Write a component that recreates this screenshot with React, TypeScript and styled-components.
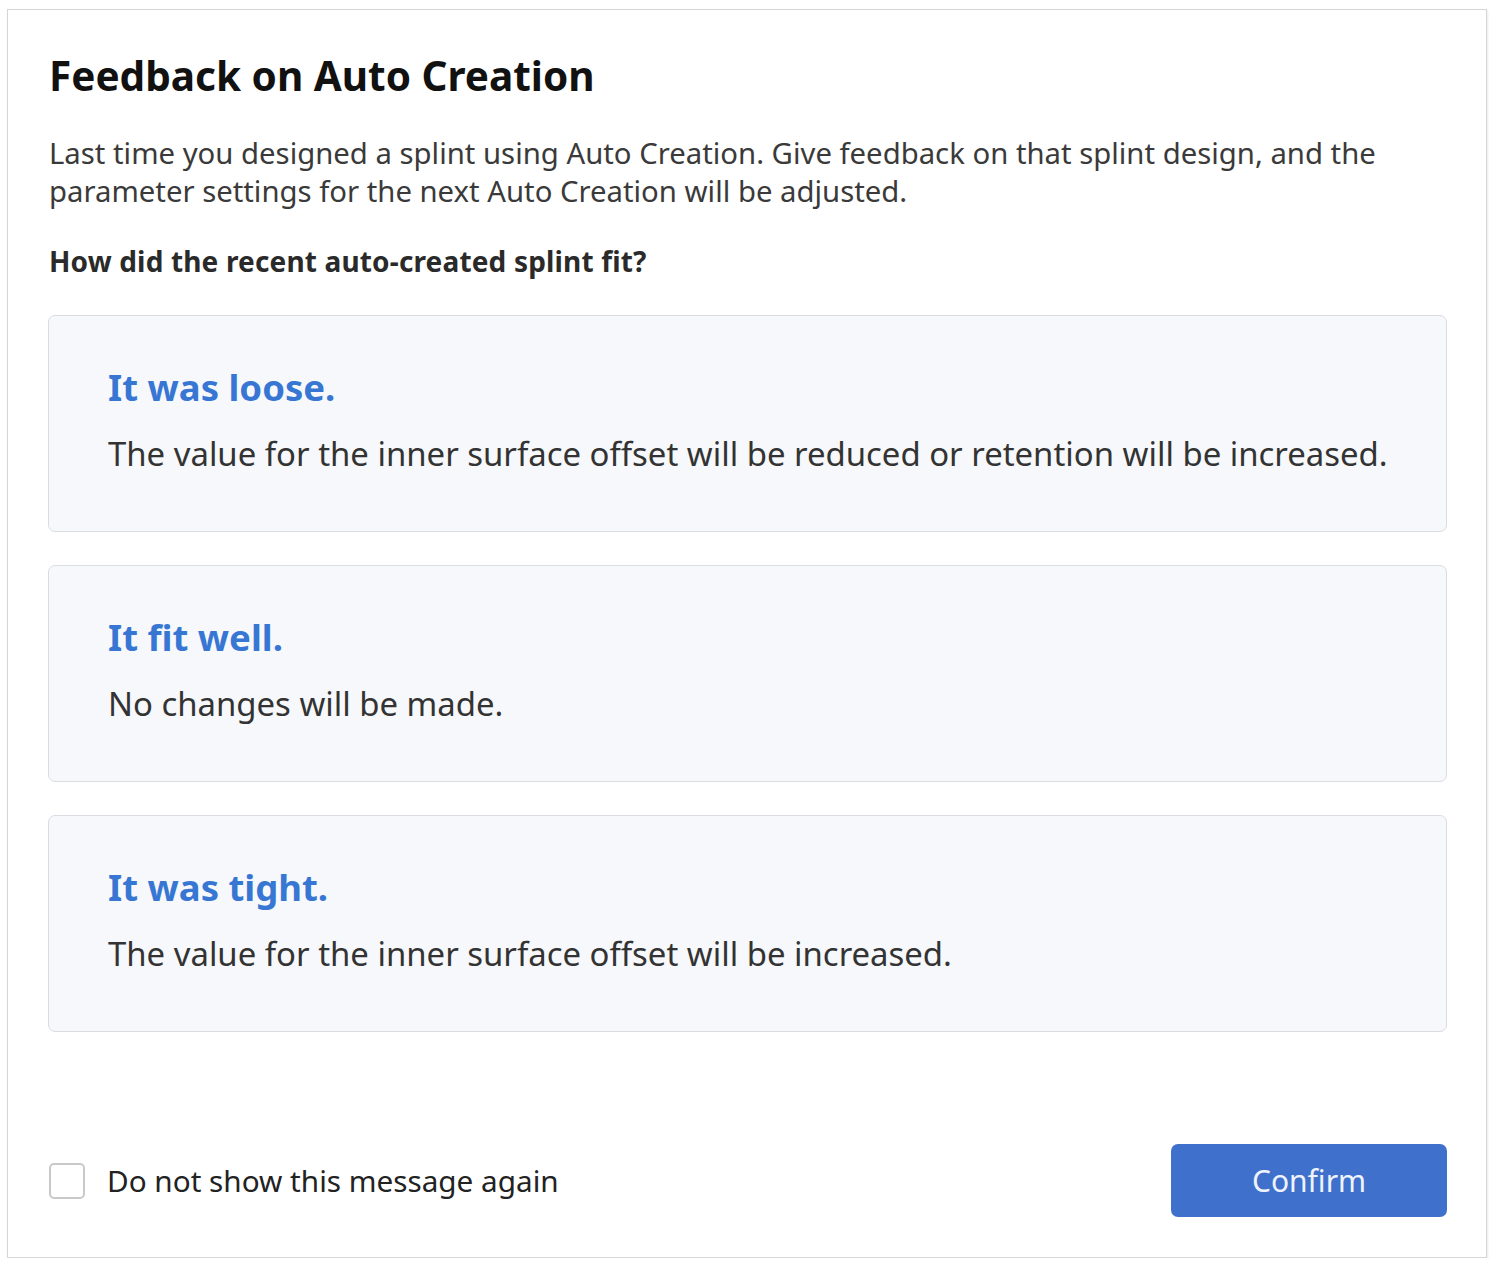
import React, { useState } from 'react';
import styled, { createGlobalStyle } from 'styled-components';

const GlobalStyle = createGlobalStyle`
  html, body {
    margin: 0;
    padding: 0;
    background: #ffffff;
    font-family: 'Noto Sans', 'Open Sans', 'Liberation Sans', sans-serif;
  }
`;

const Page = styled.div`
  padding: 9px 0 0 7px;
`;

const Dialog = styled.div`
  box-sizing: border-box;
  width: 1480px;
  height: 1249px;
  border: 1px solid #d6d6d6;
  box-shadow: 1px 1px 2px rgba(0, 0, 0, 0.08);
  background: #ffffff;
  display: flex;
  flex-direction: column;
  padding: 0 39px 40px 40px;
`;

const Title = styled.h1`
  margin: 42px 0 0 1px;
  font-size: 40.5px;
  line-height: 48px;
  font-weight: 700;
  color: #111111;
`;

const Description = styled.p`
  margin: 34px 0 0 1px;
  font-size: 29.3px;
  line-height: 38px;
  color: #3a3a3a;
`;

const Question = styled.h2`
  margin: 32px 0 0 1px;
  font-size: 28px;
  line-height: 38px;
  font-weight: 700;
  letter-spacing: 0.16px;
  color: #2a2a2a;
`;

const OptionList = styled.div`
  display: flex;
  flex-direction: column;
  gap: 33px;
  margin-top: 35px;
`;

const OptionCard = styled.button<{ selected: boolean }>`
  box-sizing: border-box;
  height: 217px;
  width: 100%;
  text-align: left;
  padding: 49px 20px 0 59px;
  border: 1px solid ${(p) => (p.selected ? '#3b73d1' : '#dadce1')};
  border-radius: 7px;
  background: #f7f8fb;
  font-family: inherit;
  cursor: pointer;
  display: flex;
  flex-direction: column;
  gap: 23px;
`;

const OptionTitle = styled.span`
  font-size: 36.5px;
  line-height: 44px;
  font-weight: 700;
  color: #3777d3;
`;

const OptionText = styled.span`
  font-size: 32.9px;
  line-height: 44px;
  white-space: nowrap;
  color: #333333;
`;

const Footer = styled.div`
  margin-top: auto;
  display: flex;
  align-items: center;
  justify-content: space-between;
`;

const CheckLabel = styled.label`
  display: flex;
  align-items: center;
  gap: 22px;
  font-size: 29.7px;
  color: #222222;
  cursor: pointer;
`;

const CheckBox = styled.span<{ checked: boolean }>`
  box-sizing: border-box;
  width: 36px;
  height: 36px;
  margin-left: 1px;
  border: 2px solid #c9c9c9;
  border-radius: 5px;
  background: ${(p) => (p.checked ? '#3d6fcc' : '#ffffff')};
`;

const ConfirmButton = styled.button`
  width: 276px;
  height: 73px;
  border: none;
  border-radius: 7px;
  background: #3e70cc;
  color: #eef3fc;
  font-family: inherit;
  font-size: 30px;
  cursor: pointer;
`;

const options = [
  {
    title: 'It was loose.',
    text: 'The value for the inner surface offset will be reduced or retention will be increased.',
  },
  { title: 'It fit well.', text: 'No changes will be made.' },
  { title: 'It was tight.', text: 'The value for the inner surface offset will be increased.' },
];

const App: React.FC = () => {
  const [selected, setSelected] = useState<number | null>(null);
  const [hide, setHide] = useState(false);

  return (
    <Page>
      <GlobalStyle />
      <Dialog>
        <Title>Feedback on Auto Creation</Title>
        <Description>
          Last time you designed a splint using Auto Creation. Give feedback on that splint design, and the
          parameter settings for the next Auto Creation will be adjusted.
        </Description>
        <Question>How did the recent auto-created splint fit?</Question>
        <OptionList>
          {options.map((o, i) => (
            <OptionCard key={o.title} selected={selected === i} onClick={() => setSelected(i)}>
              <OptionTitle>{o.title}</OptionTitle>
              <OptionText>{o.text}</OptionText>
            </OptionCard>
          ))}
        </OptionList>
        <Footer>
          <CheckLabel onClick={() => setHide(!hide)}>
            <CheckBox checked={hide} />
            Do not show this message again
          </CheckLabel>
          <ConfirmButton>Confirm</ConfirmButton>
        </Footer>
      </Dialog>
    </Page>
  );
};

export default App;
